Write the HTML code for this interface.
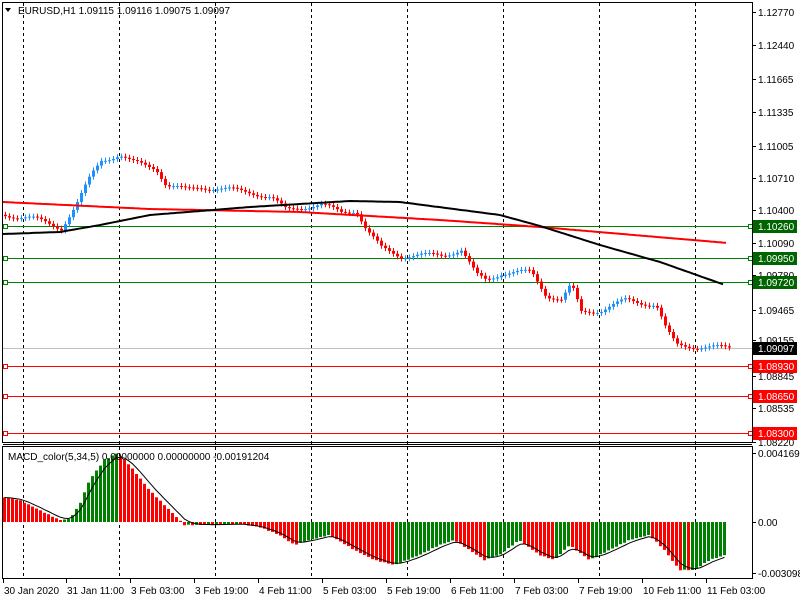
<!DOCTYPE html>
<html><head><meta charset="utf-8"><style>
body{margin:0;background:#fff;width:800px;height:600px;overflow:hidden;font-family:"Liberation Sans",sans-serif}
svg text{font-family:"Liberation Sans",sans-serif;font-size:10px;fill:#000}
</style></head><body>
<svg id="s" width="800" height="600" xmlns="http://www.w3.org/2000/svg">
<rect x="0" y="0" width="800" height="600" fill="#fff"/>
<g id="g"></g>
<rect x="2.5" y="2.5" width="750" height="440" fill="none" stroke="#000"/>
<rect x="2.5" y="446.5" width="750" height="132" fill="none" stroke="#000"/>
<text x="18" y="14">EURUSD,H1  1.09115 1.09116 1.09075 1.09097</text>
<path d="M5 8 L11 8 L8 12 Z" fill="#000"/>
<text x="8" y="460" fill="#000">MACD_color(5,34,5) 0.00000000 0.00000000 -0.00191204</text>
</svg>
<script>
var g=document.getElementById('g'),h='';
function interp(pts,x){for(var i=0;i<pts.length-1;i++){if(x<=pts[i+1][0]){var a=pts[i],b=pts[i+1];return a[1]+(b[1]-a[1])*(x-a[0])/(b[0]-a[0]);}}return pts[pts.length-1][1];}
[23,119,215,311,407,503,599,695].forEach(function(x){h+='<line x1="'+(x+.5)+'" y1="3" x2="'+(x+.5)+'" y2="578" stroke="#000" stroke-dasharray="3,3"/>';});
h+='<line x1="3" y1="444.5" x2="752" y2="444.5" stroke="#000"/>';
var hl=[[226,'#008000','1.10260','#006400'],[258,'#008000','1.09950','#006400'],[282,'#008000','1.09720','#006400'],[348,'#c0c0c0','1.09097','#000'],[366,'#ff0000','1.08930','#ff0000'],[396,'#ff0000','1.08650','#ff0000'],[433,'#ff0000','1.08300','#ff0000']];
hl.forEach(function(l){h+='<line x1="3" y1="'+(l[0]+.5)+'" x2="752" y2="'+(l[0]+.5)+'" stroke="'+l[1]+'"/>';
if(l[1]!='#c0c0c0'){h+='<rect x="3.5" y="'+(l[0]-1.5)+'" width="4" height="4" fill="#fff" stroke="'+l[1]+'"/><rect x="748.5" y="'+(l[0]-1.5)+'" width="4" height="4" fill="#fff" stroke="'+l[1]+'"/>';}});
var P=[[5,215],[30,218],[60,228],[75,205],[90,175],[100,160],[118,155],[130,162],[155,168],[165,185],[185,190],[200,187],[250,192],[270,198],[285,210],[300,207],[320,205],[340,212],[355,210],[365,230],[380,248],[400,256],[440,255],[460,250],[475,275],[485,280],[500,273],[530,272],[545,295],[560,300],[570,285],[580,312],[600,310],[625,300],[655,305],[665,330],[675,345],[700,347],[728,348]];
var prev=interp(P,3);
for(var x=4;x<=728;x+=4){var c=interp(P,x)+Math.sin(x*1.7)*2.5;var o=prev;var up=c<o;var col=up?'#1e90ff':'#ff0000';var t=Math.min(o,c),b=Math.max(o,c);
h+='<line x1="'+(x+1.5)+'" y1="'+(t-3)+'" x2="'+(x+1.5)+'" y2="'+(b+3)+'" stroke="'+col+'"/>';
h+='<rect x="'+x+'" y="'+t+'" width="3" height="'+Math.max(1,b-t)+'" fill="'+col+'"/>';prev=c;}
function pl(pts,col,w){var s='';for(var x=3;x<=pts[pts.length-1][0];x+=3)s+=x+','+interp(pts,x).toFixed(1)+' ';h+='<polyline points="'+s+'" fill="none" stroke="'+col+'" stroke-width="'+w+'"/>';}
pl([[3,202],[150,209],[300,212],[440,220],[540,227],[728,243]],'#ff0000',2);
pl([[3,234],[60,232],[100,225],[150,215],[250,207],[350,201],[400,202],[500,215],[540,226],[600,245],[660,262],[725,285]],'#000',2);
var M=[[3,497],[20,500],[40,510],[60,520],[70,519],[80,505],[90,480],[105,460],[118,453],[130,465],[150,490],[170,510],[185,525],[200,525],[240,524],[260,527],[280,535],[295,545],[310,540],[330,535],[355,550],[375,560],[395,565],[420,555],[440,545],[455,540],[470,550],[485,560],[500,555],[520,540],[540,555],[555,560],[570,545],[590,560],[610,550],[630,540],[650,535],[665,550],[680,570],[695,570],[710,560],[726,555]];
var pv=null,sig=null,ss='';
for(var x=3;x<=724;x+=4){var v=interp(M,x+2)+Math.sin(x*0.9)*0.3;
var col=(pv!==null&&v<pv)?'#008000':'#ff0000';
var t=Math.min(v,522),b=Math.max(v,522);h+='<rect x="'+x+'" y="'+t.toFixed(1)+'" width="3" height="'+Math.max(1,b-t).toFixed(1)+'" fill="'+col+'"/>';
sig=sig===null?v:sig+(v-sig)*0.4;ss+=(x+1.5)+','+sig.toFixed(1)+' ';pv=v;}
h+='<polyline points="'+ss+'" fill="none" stroke="#000" stroke-width="1"/>';
[[12,'1.12770'],[45,'1.12440'],[79,'1.11665'],[112,'1.11335'],[146,'1.11005'],[178,'1.10710'],[210,'1.10400'],[243,'1.10090'],[275,'1.09780'],[310,'1.09465'],[340,'1.09155'],[376,'1.08845'],[408,'1.08535'],[442,'1.08220'],[453,'0.0041694'],[522,'0.00'],[573,'-0.003098']].forEach(function(a){h+='<line x1="752" y1="'+(a[0]+.5)+'" x2="756" y2="'+(a[0]+.5)+'" stroke="#000"/><text x="758" y="'+(a[0]+4)+'">'+a[1]+'</text>';});
hl.forEach(function(l){h+='<rect x="753" y="'+(l[0]-6)+'" width="44" height="13" fill="'+l[3]+'"/><text x="758" y="'+(l[0]+4)+'" style="fill:#fff">'+l[2]+'</text>';});
[[3,'30 Jan 2020'],[66,'31 Jan 11:00'],[130,'3 Feb 03:00'],[194,'3 Feb 19:00'],[258,'4 Feb 11:00'],[322,'5 Feb 03:00'],[386,'5 Feb 19:00'],[450,'6 Feb 11:00'],[514,'7 Feb 03:00'],[578,'7 Feb 19:00'],[642,'10 Feb 11:00'],[706,'11 Feb 03:00']].forEach(function(a){h+='<line x1="'+(a[0]+.5)+'" y1="578" x2="'+(a[0]+.5)+'" y2="583" stroke="#000"/><text x="'+(a[0]+1)+'" y="594">'+a[1]+'</text>';});
g.innerHTML=h;
</script>
</body></html>
